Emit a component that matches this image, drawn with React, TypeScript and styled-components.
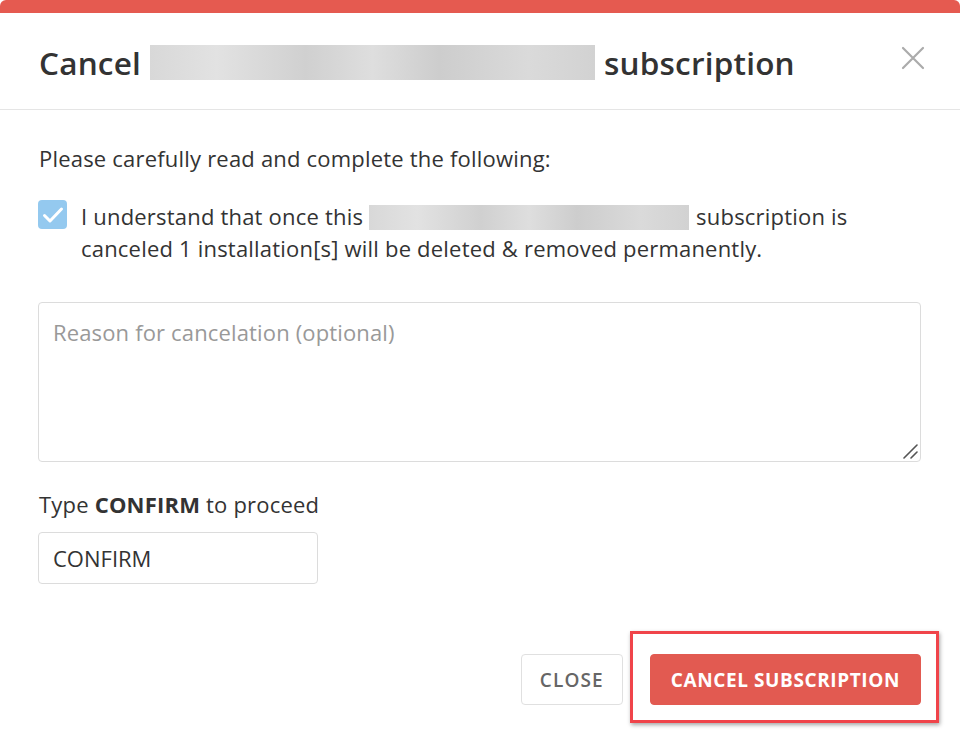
import React from "react";
import styled, { createGlobalStyle } from "styled-components";

const Global = createGlobalStyle`
  html, body { margin: 0; padding: 0; background: #ffffff; }
  body { font-family: "Open Sans", "Liberation Sans", sans-serif; color: #333333; }
  * { box-sizing: border-box; }
`;

const Modal = styled.div`
  width: 960px;
  height: 744px;
  background: #ffffff;
  border-top: 13px solid #e55a50;
  border-radius: 6px 6px 0 0;
  display: flex;
  flex-direction: column;
`;

const Header = styled.div`
  height: 97px;
  border-bottom: 1px solid #e5e5e5;
  display: flex;
  align-items: center;
  padding: 0 34px 0 39px;
`;

const Title = styled.h2`
  margin: 0;
  flex: 1;
  display: flex;
  align-items: center;
  gap: 9px;
  font-size: 31.5px;
  font-weight: 600;
  letter-spacing: 0.2px;
  color: #333333;
  padding-top: 2px;
`;

const Redacted = styled.span<{ $w: number; $h: number }>`
  display: inline-block;
  width: ${(p) => p.$w}px;
  height: ${(p) => p.$h}px;
  background: linear-gradient(90deg, #d8d8d8 0%, #e2e2e2 15%, #d0d0d0 35%, #dedede 50%, #cdcdcd 65%, #dadada 85%, #d2d2d2 100%);
  vertical-align: middle;
`;

const CloseX = styled.button`
  border: none;
  background: none;
  padding: 0;
  width: 26px;
  height: 26px;
  margin-top: -7px;
  cursor: pointer;
  display: flex;
  align-items: center;
  justify-content: center;
`;

const Body = styled.div`
  padding: 33px 39px 0 38px;
  display: flex;
  flex-direction: column;
`;

const Lead = styled.p`
  margin: 0 0 0 1px;
  font-size: 22px;
  line-height: 30px;
  letter-spacing: 0.2px;
  color: #333333;
`;

const CheckRow = styled.label`
  display: flex;
  gap: 14px;
  margin-top: 27px;
  align-items: flex-start;
`;

const CheckBox = styled.span`
  flex: none;
  width: 29px;
  height: 29px;
  border-radius: 4px;
  background: #94c9ef;
  display: flex;
  align-items: center;
  justify-content: center;
`;

const CheckText = styled.span`
  font-size: 22px;
  line-height: 32px;
  letter-spacing: 0.2px;
  color: #333333;
`;

const InlineRedacted = styled(Redacted)`
  margin: 0 7px 0 6px;
  vertical-align: -5px;
`;

const TextArea = styled.div`
  margin-top: 38px;
  height: 160px;
  border: 1px solid #dcdcdc;
  border-radius: 4px;
  position: relative;
  padding: 14px 14px;
  font-size: 22px;
  line-height: 30px;
  letter-spacing: 0.15px;
  color: #999999;
`;

const Grip = styled.svg`
  position: absolute;
  right: 2px;
  bottom: 2px;
`;

const FieldLabel = styled.div`
  margin-top: 27px;
  margin-left: 1px;
  font-size: 22px;
  line-height: 30px;
  letter-spacing: 0.2px;
  color: #333333;
  b { font-weight: 700; }
`;

const Input = styled.div`
  margin-top: 13px;
  width: 280px;
  height: 52px;
  border: 1px solid #dcdcdc;
  border-radius: 4px;
  display: flex;
  align-items: center;
  padding: 0 14px;
  font-size: 22px;
  color: #333333;
`;

const Footer = styled.div`
  margin-top: 70px;
  display: flex;
  justify-content: flex-end;
  align-items: center;
  gap: 27px;
`;

const Button = styled.button<{ $primary?: boolean }>`
  height: 51px;
  padding: 0 ${(p) => (p.$primary ? 20 : 18)}px;
  border-radius: 4px;
  font-family: "Open Sans", "Liberation Sans", sans-serif;
  font-size: 19px;
  font-weight: ${(p) => (p.$primary ? 700 : 600)};
  letter-spacing: ${(p) => (p.$primary ? 0.6 : 1.1)}px;
  color: ${(p) => (p.$primary ? "#ffffff" : "#666666")};
  background: ${(p) => (p.$primary ? "#e25a51" : "#ffffff")};
  border: 1px solid ${(p) => (p.$primary ? "#e25a51" : "#e0e0e0")};
  cursor: pointer;
`;

const Highlight = styled.div`
  position: relative;
  display: flex;
`;

const HighlightFrame = styled.span`
  position: absolute;
  left: -20px;
  top: -23px;
  right: -18px;
  bottom: -18px;
  border: 3px solid #f0444a;
  box-shadow: 1px 2px 4px rgba(0, 0, 0, 0.35);
  pointer-events: none;
`;

export default function App() {
  return (
    <>
      <Global />
      <Modal>
        <Header>
          <Title>
            Cancel <Redacted $w={445} $h={35} /> subscription
          </Title>
          <CloseX aria-label="close">
            <svg width="24" height="24" viewBox="0 0 24 24">
              <path d="M2 2 L22 22 M22 2 L2 22" stroke="#ababab" strokeWidth="2.2" strokeLinecap="round" />
            </svg>
          </CloseX>
        </Header>
        <Body>
          <Lead>Please carefully read and complete the following:</Lead>
          <CheckRow>
            <CheckBox>
              <svg width="22" height="18" viewBox="0 0 22 18">
                <path d="M2.5 9.5 L8 15 L19.5 3" stroke="#ffffff" strokeWidth="3" fill="none" strokeLinecap="round" strokeLinejoin="round" />
              </svg>
            </CheckBox>
            <CheckText>
              I understand that once this
              <InlineRedacted $w={320} $h={25} />
              subscription is canceled 1 installation[s] will be deleted &amp; removed permanently.
            </CheckText>
          </CheckRow>
          <TextArea>
            Reason for cancelation (optional)
            <Grip width="16" height="16" viewBox="0 0 16 16">
              <path d="M2 15 L15 2 M9 15 L15 9" stroke="#555555" strokeWidth="1.6" strokeLinecap="round" />
            </Grip>
          </TextArea>
          <FieldLabel>
            Type <b>CONFIRM</b> to proceed
          </FieldLabel>
          <Input>CONFIRM</Input>
          <Footer>
            <Button>CLOSE</Button>
            <Highlight>
              <HighlightFrame />
              <Button $primary>CANCEL SUBSCRIPTION</Button>
            </Highlight>
          </Footer>
        </Body>
      </Modal>
    </>
  );
}
